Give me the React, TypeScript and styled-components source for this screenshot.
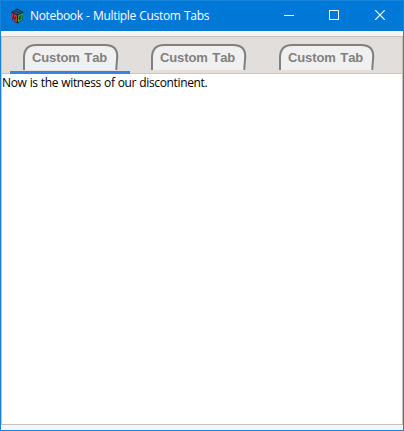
import React from "react";
import styled, { createGlobalStyle } from "styled-components";

const GlobalStyle = createGlobalStyle`
  * { box-sizing: border-box; }
  html, body { margin: 0; padding: 0; overflow: hidden; }
`;

const Window = styled.div`
  width: 404px;
  height: 431px;
  display: flex;
  flex-direction: column;
  border: 1px solid #1883d7;
  background: #f6f5f4;
  font-family: "Open Sans", "Noto Sans", sans-serif;
`;

const TitleBar = styled.header`
  display: flex;
  align-items: center;
  height: 30px;
  flex: none;
  padding-left: 10px;
  background: #0078d7;
  color: #fff;
`;

const Title = styled.span`
  flex: 1;
  margin-left: 6px;
  font-size: 12px;
  line-height: 16px;
  letter-spacing: -0.33px;
  word-spacing: 0.6px;
  white-space: nowrap;
`;

const ControlButton = styled.button`
  width: 45px;
  height: 30px;
  display: flex;
  align-items: flex-start;
  padding: 9px 0 0 17px;
  border: 0;
  background: transparent;
  color: #fff;
`;

const Controls = styled.div`
  display: flex;
  margin-right: 1px;
`;

const Notebook = styled.main`
  flex: 1;
  display: flex;
  flex-direction: column;
  margin: 5px 0;
  border: 1px solid #c6c1bc;
  background: #fff;
`;

const TabBar = styled.nav`
  display: flex;
  gap: 8px;
  height: 37px;
  flex: none;
  padding-left: 8px;
  background: #e1dedb;
  box-shadow: inset 0 -1px #cdc7c2;
`;

const Tab = styled.div<{ $active?: boolean }>`
  width: 120px;
  height: 37px;
  padding: 7px 0 0 13px;
  border-bottom: ${(p) => (p.$active ? "3px solid #3584e4" : "0")};
`;

const TabFace = styled.div`
  display: grid;
  width: 96px;
  height: 26px;

  > * { grid-area: 1 / 1; }
`;

const TabLabel = styled.span`
  padding-left: 9px;
  color: #808080;
  font: bold 13px/27px "Liberation Sans", Arial, sans-serif;
  font-kerning: none;
  letter-spacing: -0.12px;
  word-spacing: 1.2px;
  white-space: nowrap;
`;

const Content = styled.p`
  margin: 0;
  color: #000;
  font-size: 12px;
  line-height: 17px;
  letter-spacing: -0.36px;
  word-spacing: 0.4px;
  white-space: nowrap;
`;

const AppIcon = () => (
  <svg width="13" height="16" viewBox="0 0 13 16">
    <path d="M.4 4 6.2.6 12.3 4l-.8 8-5.1 3.4-5-3.4Z" fill="#14233a" />
    <path d="M.8 5 6 7.4v7.2L1.9 11.8Z" fill="#d63a3a" />
    <path d="M12 5 6.8 7.4v7.2l4.3-2.8Z" fill="#27b848" />
    <path d="M1.6 4.2 6.3 1.4l4.8 2.8-4.7 2.2Z" fill="#2c5a96" />
    <path
      d="M6.4 6.5v8.5M2.6 6.5v4l1.6 1v-3M8.3 8.2v3.4l1.6-.9V7M3.6 4.4l2-1.5 1 1.7 2.2-.6"
      fill="none"
      stroke="#14202c"
      strokeWidth=".9"
    />
  </svg>
);

const TabShape = () => (
  <svg width="96" height="26" viewBox="0 0 96 26">
    <path
      d="M1 26V14C1 5 5 1 13 1H82C90 1 94.2 5 94.2 12C94.2 17 93.3 21 93.3 26"
      fill="#f0f0f0"
      stroke="#808080"
      strokeWidth="2"
    />
  </svg>
);

const tabs = ["Custom Tab", "Custom Tab", "Custom Tab"];

export default function App() {
  return (
    <>
      <GlobalStyle />
      <Window>
        <TitleBar>
          <AppIcon />
          <Title>Notebook - Multiple Custom Tabs</Title>
          <Controls>
            <ControlButton aria-label="Minimize">
              <svg width="10" height="10"><path d="M0 5.5h10" stroke="currentColor" /></svg>
            </ControlButton>
            <ControlButton aria-label="Maximize">
              <svg width="10" height="10"><path d="M.5.5h9v9h-9Z" fill="none" stroke="currentColor" /></svg>
            </ControlButton>
            <ControlButton aria-label="Close">
              <svg width="11" height="10"><path d="m1.2.2 9.6 9.6M10.8.2 1.2 9.8" stroke="currentColor" strokeWidth="1.2" /></svg>
            </ControlButton>
          </Controls>
        </TitleBar>
        <Notebook>
          <TabBar>
            {tabs.map((label, i) => (
              <Tab key={i} $active={i === 0}>
                <TabFace>
                  <TabShape />
                  <TabLabel>{label}</TabLabel>
                </TabFace>
              </Tab>
            ))}
          </TabBar>
          <Content>Now is the witness of our discontinent.</Content>
        </Notebook>
      </Window>
    </>
  );
}
